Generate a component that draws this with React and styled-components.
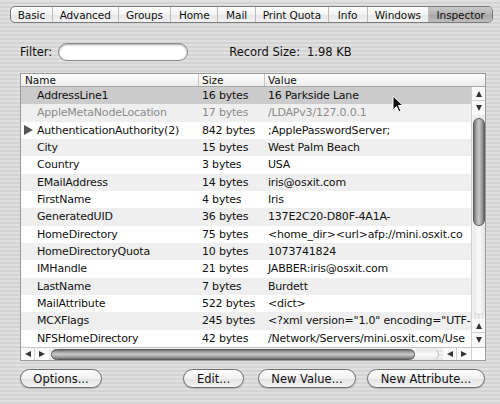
import React from "react";
import styled, { createGlobalStyle } from "styled-components";

const GlobalStyle = createGlobalStyle`
  html, body {
    margin: 0;
    padding: 0;
    background: #d9d9d9;
  }
  * {
    box-sizing: border-box;
  }
`;

const Window = styled.div`
  position: relative;
  width: 500px;
  height: 404px;
  overflow: hidden;
  font-family: "DejaVu Sans", "Liberation Sans", sans-serif;
  color: #111;
  background-color: #dcdcdc;
  background-image: repeating-linear-gradient(
    to bottom,
    #e0e0e0 0px,
    #e0e0e0 2px,
    #d4d4d4 2px,
    #d4d4d4 4px
  );
  padding-top: 6px;
`;

const TabBar = styled.div`
  display: flex;
  margin-left: 10px;
  width: 483px;
  height: 17px;
  border: 1px solid #7a7a7a;
  border-radius: 5px;
  overflow: hidden;
  background: linear-gradient(to bottom, #ffffff 0%, #f4f4f4 50%, #e6e6e6 51%, #f2f2f2 100%);
`;

const Tab = styled.div`
  width: ${(p) => p.w}px;
  display: flex;
  align-items: center;
  justify-content: center;
  font-size: 10.5px;
  letter-spacing: -0.1px;
  color: #111;
  border-right: ${(p) => (p.last ? "none" : "1px solid #bdbdbd")};
  background: ${(p) =>
    p.active
      ? "linear-gradient(to bottom, #c9c9c9 0%, #b3b3b3 50%, #a4a4a4 51%, #bdbdbd 100%)"
      : "transparent"};
`;

const FilterRow = styled.div`
  display: flex;
  align-items: center;
  margin-top: 20px;
  margin-left: 20px;
  height: 18px;
  font-size: 11.5px;
`;

const FilterField = styled.div`
  width: 130px;
  height: 18px;
  margin-left: 6px;
  border-radius: 9px;
  border: 1px solid #8a8a8a;
  background: #fff;
  box-shadow: inset 0 1px 2px rgba(0, 0, 0, 0.35);
`;

const RecordLabel = styled.span`
  margin-left: 41px;
`;

const RecordValue = styled.span`
  margin-left: 7px;
`;

const Table = styled.div`
  margin-top: 12px;
  margin-left: 20px;
  width: 466px;
  height: 288px;
  border: 1px solid #9a9a9a;
  background: #fff;
  display: grid;
  grid-template-columns: 1fr 14px;
  grid-template-rows: 13px 260px 13px;
`;

const Header = styled.div`
  grid-column: 1 / span 2;
  display: flex;
  border-bottom: 1px solid #a8a8a8;
  background: linear-gradient(to bottom, #ffffff, #ececec);
  font-size: 10.5px;
  line-height: 12px;
`;

const HeaderCell = styled.div`
  width: ${(p) => p.w}px;
  padding-left: ${(p) => p.pad}px;
  border-right: ${(p) => (p.last ? "none" : "1px solid #c4c4c4")};
  flex: ${(p) => (p.last ? "1" : "none")};
`;

const Body = styled.div`
  overflow: hidden;
`;

const Row = styled.div`
  display: flex;
  height: 17.33px;
  align-items: center;
  font-size: 11px;
  letter-spacing: -0.2px;
  white-space: nowrap;
  color: ${(p) => (p.dim ? "#8c8c8c" : "#111")};
  background: ${(p) => (p.selected ? "#cbcbcb" : p.stripe ? "#efefef" : "#ffffff")};
`;

const NameCell = styled.div`
  width: 178px;
  padding-left: 16px;
  position: relative;
`;

const SizeCell = styled.div`
  width: 66px;
  padding-left: 3px;
  overflow: hidden;
`;

const ValueCell = styled.div`
  flex: 1;
  padding-left: 3px;
  overflow: hidden;
`;

const Disclosure = styled.span`
  position: absolute;
  left: 3px;
  top: 50%;
  transform: translateY(-50%);
  width: 0;
  height: 0;
  border-top: 5px solid transparent;
  border-bottom: 5px solid transparent;
  border-left: 9px solid #555;
`;

const VScroll = styled.div`
  display: flex;
  flex-direction: column;
  align-items: center;
  border-left: 1px solid #d0d0d0;
  background: repeating-linear-gradient(
    to right,
    #f2f2f2 0px,
    #f2f2f2 2px,
    #e6e6e6 2px,
    #e6e6e6 4px
  );
`;

const ArrowBox = styled.div`
  width: 13px;
  height: 14px;
  display: flex;
  align-items: center;
  justify-content: center;
  background: #fafafa;
  border-bottom: ${(p) => (p.sep ? "1px solid #cfcfcf" : "none")};
`;

const TriUp = styled.span`
  width: 0;
  height: 0;
  border-left: 3.5px solid transparent;
  border-right: 3.5px solid transparent;
  border-bottom: 6px solid #333;
`;

const TriDown = styled.span`
  width: 0;
  height: 0;
  border-left: 3.5px solid transparent;
  border-right: 3.5px solid transparent;
  border-top: 6px solid #333;
`;

const TriLeft = styled.span`
  width: 0;
  height: 0;
  border-top: 3.5px solid transparent;
  border-bottom: 3.5px solid transparent;
  border-right: 6px solid #333;
`;

const TriRight = styled.span`
  width: 0;
  height: 0;
  border-top: 3.5px solid transparent;
  border-bottom: 3.5px solid transparent;
  border-left: 6px solid #333;
`;

const VThumb = styled.div`
  margin-top: 3px;
  width: 12px;
  height: 108px;
  border-radius: 6px;
  border: 1px solid #5a5a5a;
  background: linear-gradient(
    to right,
    #6e6e6e 0%,
    #a9a9a9 25%,
    #c8c8c8 50%,
    #9a9a9a 80%,
    #6a6a6a 100%
  );
`;

const VTrackEnd = styled.div`
  flex: 1;
  width: 12px;
  margin-bottom: 4px;
  border-radius: 0 0 6px 6px;
  background: linear-gradient(to right, #e8e8e8, #fafafa, #e4e4e4);
  border-bottom: 1px solid #d6d6d6;
`;

const HScroll = styled.div`
  display: flex;
  align-items: center;
  border-top: 1px solid #c4c4c4;
  background: repeating-linear-gradient(
    to bottom,
    #f2f2f2 0px,
    #f2f2f2 2px,
    #e6e6e6 2px,
    #e6e6e6 4px
  );
`;

const HArrow = styled.div`
  width: 14px;
  height: 12px;
  display: flex;
  align-items: center;
  justify-content: center;
  background: #fafafa;
  border-right: ${(p) => (p.sep ? "1px solid #cfcfcf" : "none")};
`;

const HThumb = styled.div`
  margin-left: 2px;
  width: 364px;
  height: 11px;
  border-radius: 6px;
  border: 1px solid #5a5a5a;
  background: linear-gradient(
    to bottom,
    #6e6e6e 0%,
    #a9a9a9 25%,
    #c8c8c8 50%,
    #9a9a9a 80%,
    #6a6a6a 100%
  );
`;

const HTrackEnd = styled.div`
  flex: 1;
  height: 11px;
  margin-right: 4px;
  border-radius: 0 6px 6px 0;
  background: linear-gradient(to bottom, #e8e8e8, #fafafa, #e4e4e4);
  border-right: 1px solid #bcbcbc;
`;

const Corner = styled.div`
  background: #fff;
  border-top: 1px solid #c4c4c4;
  border-left: 1px solid #d0d0d0;
`;

const ButtonRow = styled.div`
  display: flex;
  margin-top: 8px;
  margin-left: 20px;
  width: 466px;
`;

const Button = styled.div`
  width: ${(p) => p.w}px;
  margin-left: ${(p) => p.ml || 0}px;
  height: 19px;
  display: flex;
  align-items: center;
  justify-content: center;
  border-radius: 10px;
  border: 1px solid #6f6f6f;
  font-size: 11.5px;
  color: #111;
  background: linear-gradient(to bottom, #ffffff 0%, #f1f1f1 50%, #e2e2e2 51%, #f4f4f4 100%);
  box-shadow: 0 1px 1px rgba(0, 0, 0, 0.2);
`;

const Cursor = styled.svg`
  position: absolute;
  left: 392px;
  top: 95px;
`;

const tabs = [
  ["Basic", 42],
  ["Advanced", 66],
  ["Groups", 53],
  ["Home", 47],
  ["Mail", 38],
  ["Print Quota", 73],
  ["Info", 39],
  ["Windows", 62],
  ["Inspector", 63],
];

// values are clipped by the column, as in the window
const rows = [
  ["AddressLine1", "16 bytes", "16 Parkside Lane"],
  ["AppleMetaNodeLocation", "17 bytes", "/LDAPv3/127.0.0.1"],
  ["AuthenticationAuthority(2)", "842 bytes", ";ApplePasswordServer;"],
  ["City", "15 bytes", "West Palm Beach"],
  ["Country", "3 bytes", "USA"],
  ["EMailAddress", "14 bytes", "iris@osxit.com"],
  ["FirstName", "4 bytes", "Iris"],
  ["GeneratedUID", "36 bytes", "137E2C20-D80F-4A1A-"],
  ["HomeDirectory", "75 bytes", "<home_dir><url>afp://mini.osxit.co"],
  ["HomeDirectoryQuota", "10 bytes", "1073741824"],
  ["IMHandle", "21 bytes", "JABBER:iris@osxit.com"],
  ["LastName", "7 bytes", "Burdett"],
  ["MailAttribute", "522 bytes", "<dict>"],
  ["MCXFlags", "245 bytes", "<?xml version=\"1.0\" encoding=\"UTF-"],
  ["NFSHomeDirectory", "42 bytes", "/Network/Servers/mini.osxit.com/Use"],
];

export default function App() {
  return (
    <>
      <GlobalStyle />
      <Window>
        <TabBar>
          {tabs.map(([label, w], i) => (
            <Tab key={label} w={w} active={label === "Inspector"} last={i === tabs.length - 1}>
              {label}
            </Tab>
          ))}
        </TabBar>

        <FilterRow>
          <span>Filter:</span>
          <FilterField />
          <RecordLabel>Record Size:</RecordLabel>
          <RecordValue>1.98 KB</RecordValue>
        </FilterRow>

        <Table>
          <Header>
            <HeaderCell w={178} pad={4}>Name</HeaderCell>
            <HeaderCell w={66} pad={3}>Size</HeaderCell>
            <HeaderCell pad={3} last>Value</HeaderCell>
          </Header>
          <Body>
            {rows.map(([name, size, value], i) => (
              <Row key={name} selected={i === 0} stripe={i % 2 === 1} dim={i === 1}>
                <NameCell>
                  {i === 2 && <Disclosure />}
                  {name}
                </NameCell>
                <SizeCell>{size}</SizeCell>
                <ValueCell>{value}</ValueCell>
              </Row>
            ))}
          </Body>
          <VScroll>
            <ArrowBox sep>
              <TriUp />
            </ArrowBox>
            <ArrowBox>
              <TriDown />
            </ArrowBox>
            <VThumb />
            <VTrackEnd />
            <ArrowBox sep>
              <TriUp />
            </ArrowBox>
            <ArrowBox>
              <TriDown />
            </ArrowBox>
          </VScroll>
          <HScroll>
            <HArrow sep>
              <TriLeft />
            </HArrow>
            <HArrow>
              <TriRight />
            </HArrow>
            <HThumb />
            <HTrackEnd />
            <HArrow sep>
              <TriLeft />
            </HArrow>
            <HArrow>
              <TriRight />
            </HArrow>
          </HScroll>
          <Corner />
        </Table>

        <ButtonRow>
          <Button w={82}>Options...</Button>
          <Button w={61} ml={81}>Edit...</Button>
          <Button w={98} ml={14}>New Value...</Button>
          <Button w={118} ml={11}>New Attribute...</Button>
        </ButtonRow>

        <Cursor width="12" height="19" viewBox="0 0 12 19">
          <path
            d="M1 1 L1 15 L4.5 11.5 L7 17 L9 16 L6.5 10.5 L11 10.5 Z"
            fill="#111"
            stroke="#fff"
            strokeWidth="1"
            strokeLinejoin="round"
          />
        </Cursor>
      </Window>
    </>
  );
}
